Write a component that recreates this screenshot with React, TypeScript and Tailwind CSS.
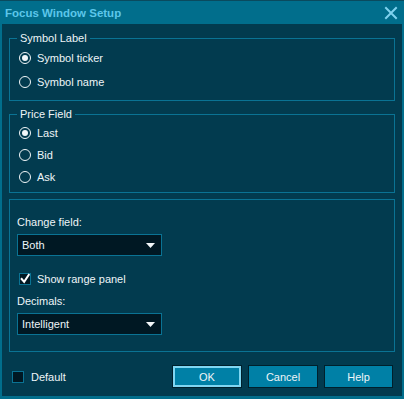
import { useState } from "react";

// ── Small dialog controls ────────────────────────────────────────────────

function Radio({ checked, label, onClick }: { checked: boolean; label: string; onClick: () => void }) {
  return (
    <button type="button" onClick={onClick} className="flex items-center h-[22px] pl-[9px] gap-[6px] text-left">
      <span className="w-[12px] h-[12px] rounded-full border border-[#f2f7f9] flex items-center justify-center">
        {checked && <span className="w-[6px] h-[6px] rounded-full bg-[#f2f7f9]" />}
      </span>
      <span>{label}</span>
    </button>
  );
}

function Check({ checked }: { checked: boolean }) {
  return (
    <span className="w-[12px] h-[12px] border border-[#0a7394] bg-[#001823] flex items-center justify-center">
      {checked && (
        <svg width="12" height="12" viewBox="0 0 12 12" fill="none" stroke="#ffffff" strokeWidth="2.4" strokeLinecap="square">
          <polyline points="2,6 5,9.5 10.5,1" />
        </svg>
      )}
    </span>
  );
}

function Select({ value }: { value: string }) {
  return (
    <div className="w-[145px] h-[22px] border border-[#0a7394] bg-[#001823] flex items-center justify-between pl-[4px] pr-[6px]">
      <span>{value}</span>
      <svg width="9" height="5" viewBox="0 0 9 5">
        <polygon points="0,0 9,0 4.5,5" fill="#f2f7f9" />
      </svg>
    </div>
  );
}

export default function App() {
  const [symbol, setSymbol] = useState("ticker");
  const [price, setPrice] = useState("last");
  const [showRange, setShowRange] = useState(true);
  const [isDefault, setIsDefault] = useState(false);

  return (
    <div
      className="w-[404px] h-[399px] bg-[#016e8c] flex flex-col text-[11px] text-[#eef5f8] leading-[14px]"
      style={{ fontFamily: '"Liberation Sans", Arial, sans-serif' }}
    >
      {/* Title bar */}
      <div className="h-[24px] shrink-0 flex items-center justify-between pl-[5px] pr-[6px] border-t border-[#0a4a5e]">
        <span className="text-[11.5px] font-bold text-[#5cc6ea]">Focus Window Setup</span>
        <svg width="14" height="14" viewBox="0 0 14 14" stroke="#7fd2ee" strokeWidth="2" strokeLinecap="square">
          <path d="M2 2L12 12M12 2L2 12" />
        </svg>
      </div>

      {/* Body */}
      <div className="flex-1 mx-[2px] mb-[3px] bg-[#023b4f] flex flex-col px-[7px]">
        <fieldset className="border border-[#0a7394] mt-[7px] pt-[1px] pb-[6px]">
          <legend className="ml-[7px] px-[3px] leading-[14px]">Symbol Label</legend>
          <div className="flex flex-col">
            <div className="h-[24px] flex items-center">
              <Radio checked={symbol === "ticker"} label="Symbol ticker" onClick={() => setSymbol("ticker")} />
            </div>
            <div className="h-[24px] flex items-center">
              <Radio checked={symbol === "name"} label="Symbol name" onClick={() => setSymbol("name")} />
            </div>
          </div>
        </fieldset>

        <fieldset className="border border-[#0a7394] mt-[6px] pt-[1px] pb-[4px]">
          <legend className="ml-[7px] px-[3px] leading-[14px]">Price Field</legend>
          <div className="flex flex-col">
            <Radio checked={price === "last"} label="Last" onClick={() => setPrice("last")} />
            <Radio checked={price === "bid"} label="Bid" onClick={() => setPrice("bid")} />
            <Radio checked={price === "ask"} label="Ask" onClick={() => setPrice("ask")} />
          </div>
        </fieldset>

        <div className="border border-[#0a7394] mt-[6px] pt-[15px] pb-[16px] pl-[7px] flex flex-col">
          <span>Change field:</span>
          <div className="mt-[5px]">
            <Select value="Both" />
          </div>
          <button
            type="button"
            onClick={() => setShowRange(!showRange)}
            className="mt-[16px] ml-[2px] flex items-center gap-[6px] h-[14px] text-left"
          >
            <Check checked={showRange} />
            <span>Show range panel</span>
          </button>
          <span className="mt-[8px]">Decimals:</span>
          <div className="mt-[5px]">
            <Select value="Intelligent" />
          </div>
        </div>

        {/* Footer */}
        <div className="mt-[13px] flex items-center justify-between">
          <button type="button" onClick={() => setIsDefault(!isDefault)} className="ml-[3px] flex items-center gap-[7px]">
            <Check checked={isDefault} />
            <span>Default</span>
          </button>
          <div className="flex gap-[6px] mr-[2px]">
            <button className="w-[70px] h-[23px] border border-[#00202c] bg-[#0080a6]">
              <span className="block w-full h-full border-2 border-[#7fd6f2] leading-[19px]">OK</span>
            </button>
            <button className="w-[70px] h-[23px] border border-[#00202c] bg-[#0080a6]">Cancel</button>
            <button className="w-[69px] h-[23px] border border-[#00202c] bg-[#0080a6]">Help</button>
          </div>
        </div>
      </div>
    </div>
  );
}
